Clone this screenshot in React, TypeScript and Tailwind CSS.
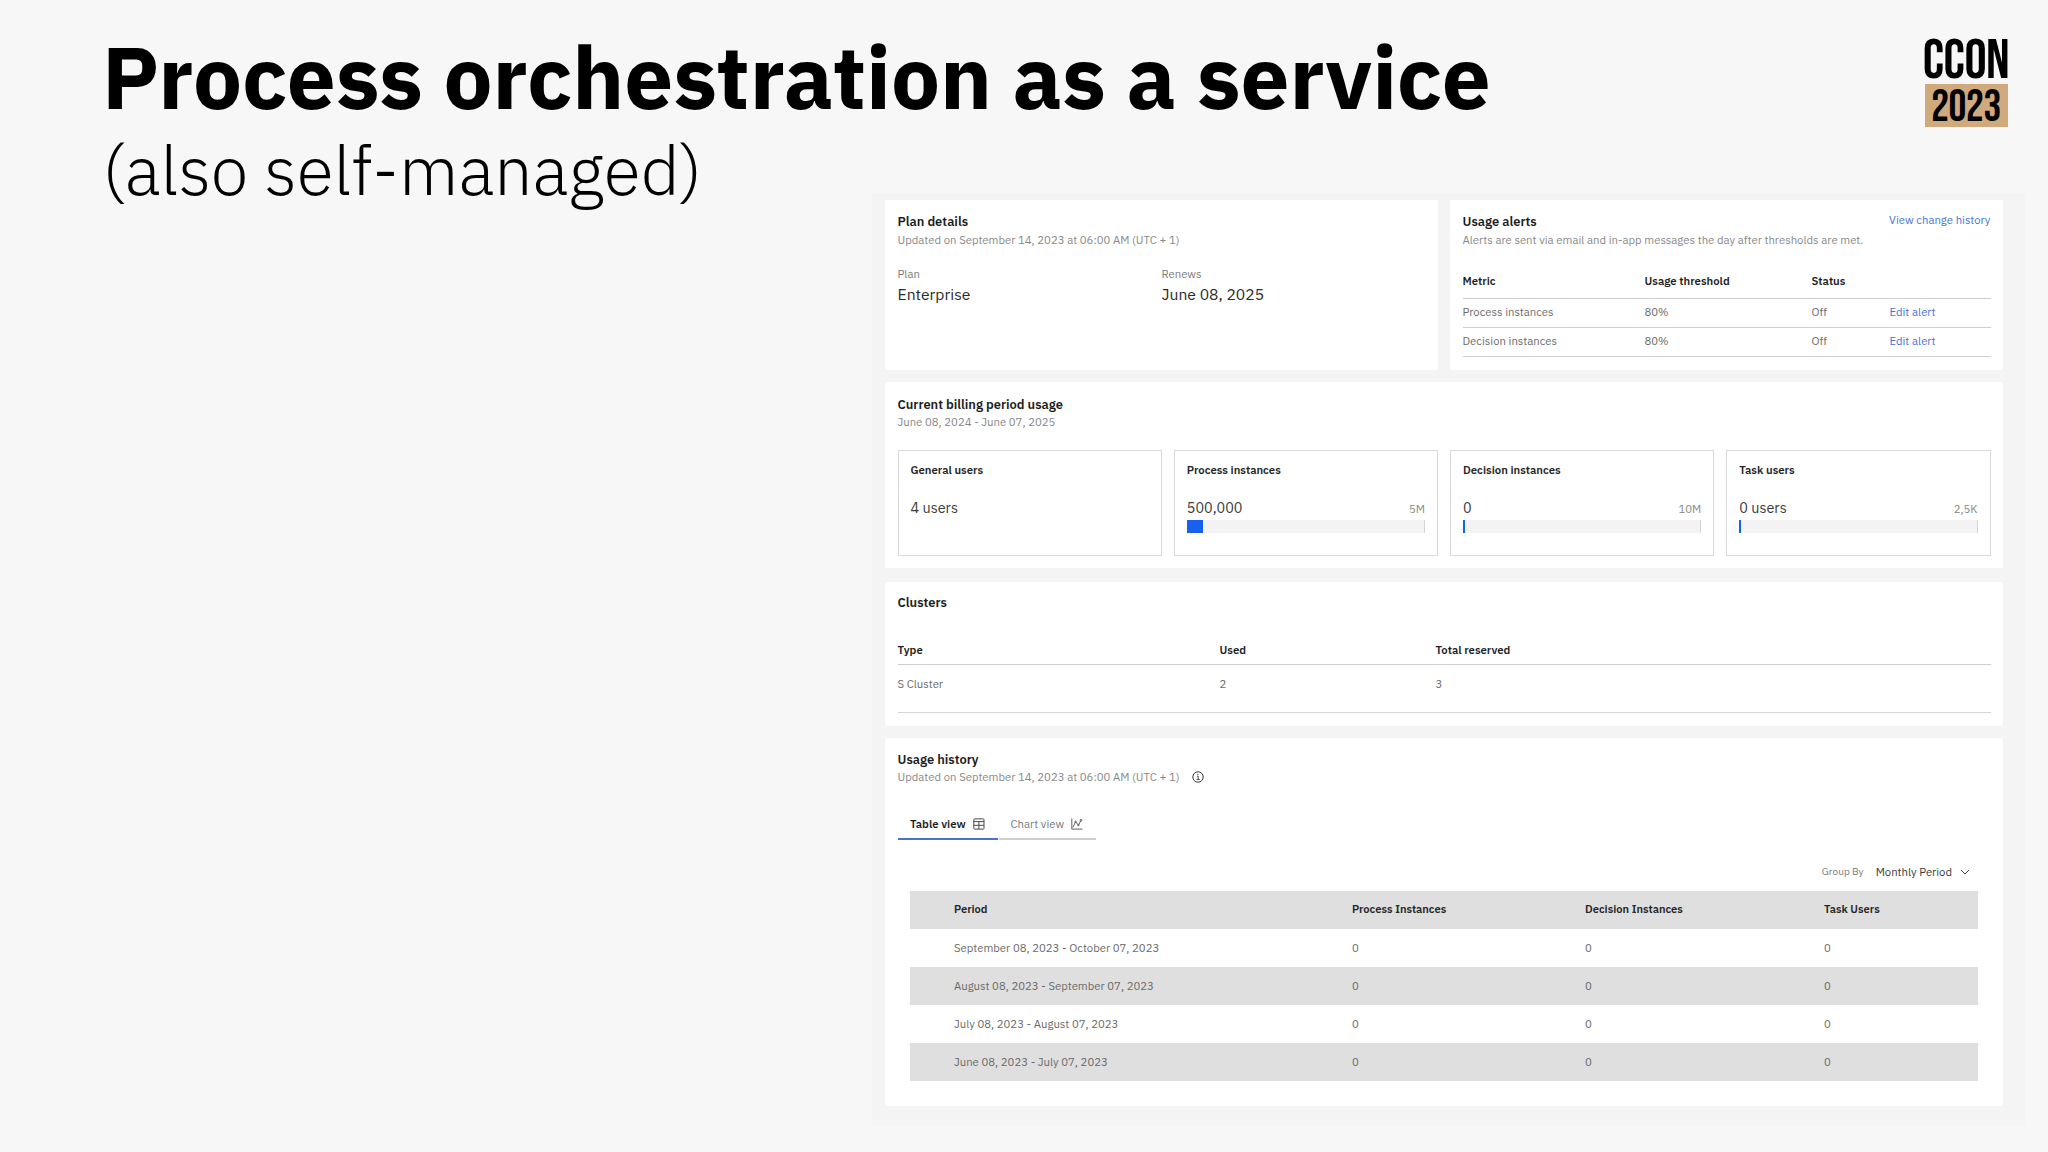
import clsx from "clsx";
import { ReactNode } from "react";

const ALERTS = [
  { metric: "Process instances", threshold: "80%", status: "Off" },
  { metric: "Decision instances", threshold: "80%", status: "Off" },
];

const USAGE = [
  { label: "General users", value: "4 users" },
  { label: "Process instances", value: "500,000", limit: "5M", fill: 16 },
  { label: "Decision instances", value: "0", limit: "10M", fill: 2 },
  { label: "Task users", value: "0 users", limit: "2,5K", fill: 2 },
];

const HISTORY = [
  "September 08, 2023 - October 07, 2023",
  "August 08, 2023 - September 07, 2023",
  "July 08, 2023 - August 07, 2023",
  "June 08, 2023 - July 07, 2023",
];

const HISTORY_COLS = "grid grid-cols-[398px_233px_239px_1fr] items-center pl-11";

function Card({ className, children }: { className?: string; children: ReactNode }) {
  return <section className={clsx("rounded-[2px] bg-white px-[12.5px]", className)}>{children}</section>;
}

function Title({ children }: { children: ReactNode }) {
  return <h2 className="text-[12.9px] leading-4 font-semibold text-[#1c1c1c]">{children}</h2>;
}

function InfoIcon() {
  return (
    <svg className="size-3" viewBox="0 0 12 12" fill="none" stroke="#3a3a3a">
      <circle cx="6" cy="6" r="5.2" strokeWidth="1" />
      <path d="M5 5.2h1.2v3.2M4.5 8.5h3.2" strokeWidth="0.9" />
      <circle cx="5.9" cy="3.4" r="0.6" fill="#3a3a3a" stroke="none" />
    </svg>
  );
}

function TableIcon() {
  return (
    <svg className="size-3" viewBox="0 0 12 12" fill="none" stroke="#4a4a4a" strokeWidth="1">
      <rect x="0.8" y="0.9" width="10.2" height="10.2" rx="0.8" />
      <path d="M0.8 3.6h10.2M0.8 7.3h10.2M5.9 3.6v7.5" />
    </svg>
  );
}

function ChartIcon() {
  return (
    <svg className="size-3" viewBox="0 0 12 12" fill="none" stroke="#626262" strokeWidth="1">
      <path d="M0.8 0.5v10.6h10.7" />
      <path d="M1.8 9.4 4.6 3.8 7.4 7.2 9.9 2.6" />
      <circle cx="4.6" cy="3.8" r="0.7" />
      <circle cx="7.4" cy="7.1" r="0.7" />
      <circle cx="10" cy="2.3" r="0.9" />
    </svg>
  );
}

function Logo() {
  return (
    <div className="mt-[39px] flex w-[84px] flex-col items-center font-['Bebas_Neue','Roboto_Condensed',sans-serif] text-black">
      <div className="text-[55.5px] leading-[45px] tracking-[-0.5px]">CCON</div>
      <div className="flex h-[43px] w-[83px] items-center justify-center bg-[#d0aa7c] pt-[5px] text-[44.5px] leading-[38px] tracking-[-0.4px]">
        2023
      </div>
    </div>
  );
}

function PlanDetails() {
  return (
    <Card className="pt-[14px]">
      <Title>Plan details</Title>
      <p className="mt-0.5 leading-4 text-[#888888]">Updated on September 14, 2023 at 06:00 AM (UTC + 1)</p>
      <div className="mt-[18px] grid grid-cols-2">
        {[["Plan", "Enterprise"], ["Renews", "June 08, 2025"]].map(([label, value]) => (
          <div key={label}>
            <p className="leading-4 text-[#7a7a7a]">{label}</p>
            <p className="mt-0.5 text-[15.7px] leading-5 text-[#2b2b2b]">{value}</p>
          </div>
        ))}
      </div>
    </Card>
  );
}

function UsageAlerts() {
  return (
    <Card className="pt-[14px]">
      <div className="flex justify-between">
        <Title>Usage alerts</Title>
        <a className="-mt-0.5 leading-4 text-[#4574d8]">View change history</a>
      </div>
      <p className="mt-0.5 leading-4 text-[#888888]">
        Alerts are sent via email and in-app messages the day after thresholds are met.
      </p>
      <div className="mt-[17px]">
        <div className="grid h-[34px] grid-cols-[182px_167px_78px_1fr] items-center border-b border-[#cfcfcf] font-semibold text-[#1f1f1f]">
          <span>Metric</span>
          <span>Usage threshold</span>
          <span>Status</span>
        </div>
        {ALERTS.map((alert) => (
          <div
            key={alert.metric}
            className="grid h-[29px] grid-cols-[182px_167px_78px_1fr] items-center border-b border-[#cfcfcf] pb-0.5"
          >
            <span>{alert.metric}</span>
            <span>{alert.threshold}</span>
            <span>{alert.status}</span>
            <a className="text-[#4574d8]">Edit alert</a>
          </div>
        ))}
      </div>
    </Card>
  );
}

function BillingUsage() {
  return (
    <Card className="h-[186px] pt-[15px]">
      <Title>Current billing period usage</Title>
      <p className="mt-px leading-4 text-[#888888]">June 08, 2024 - June 07, 2025</p>
      <div className="mt-5 grid grid-cols-4 gap-3">
        {USAGE.map((item) => (
          <div key={item.label} className="h-[106px] border border-[#d9d9d9] px-3 pt-[11px]">
            <p className="leading-4 font-semibold text-[#262626]">{item.label}</p>
            <div className="mt-5 flex items-baseline justify-between leading-5">
              <span className="text-[14.4px] text-[#3a3a3a]">{item.value}</span>
              {item.limit && <span className="text-[#888888]">{item.limit}</span>}
            </div>
            {item.limit && (
              <div className="mt-px h-[13px] border-r border-[#d4d4d4] bg-[#f3f3f3]">
                <div className="h-full bg-[#1860f0]" style={{ width: item.fill }} />
              </div>
            )}
          </div>
        ))}
      </div>
    </Card>
  );
}

function Clusters() {
  return (
    <Card className="mt-0.5 h-36 pt-[13px]">
      <Title>Clusters</Title>
      <div className="mt-[26px] grid h-7 grid-cols-[322px_216px_1fr] items-center border-b border-[#cfcfcf] font-semibold text-[#1f1f1f]">
        <span>Type</span>
        <span>Used</span>
        <span>Total reserved</span>
      </div>
      <div className="grid h-12 grid-cols-[322px_216px_1fr] items-center border-b border-[#d4d4d4] pb-2">
        <span>S Cluster</span>
        <span>2</span>
        <span>3</span>
      </div>
    </Card>
  );
}

function UsageHistory() {
  return (
    <Card className="h-[368px] pt-[14px]">
      <Title>Usage history</Title>
      <div className="mt-px flex items-center gap-3">
        <p className="leading-4 text-[#888888]">Updated on September 14, 2023 at 06:00 AM (UTC + 1)</p>
        <InfoIcon />
      </div>
      <div className="mt-[25px] flex gap-px">
        <div className="flex h-[30px] w-[100px] items-center gap-[7px] border-b-2 border-[#4574c8] pl-[12.5px] font-semibold text-[#1f1f1f]">
          Table view
          <TableIcon />
        </div>
        <div className="flex h-[30px] w-[97px] items-center gap-[7px] border-b-2 border-[#cfcfcf] pl-3 text-[#7a7a7a]">
          Chart view
          <ChartIcon />
        </div>
      </div>
      <div className="mt-[22px] px-[12.5px]">
        <div className="flex h-5 items-center justify-end pr-2">
          <span className="text-[10.1px] text-[#7a7a7a]">Group By</span>
          <span className="ml-3 text-[#3a3a3a]">Monthly Period</span>
          <svg className="ml-2 h-1.5 w-[10px]" viewBox="0 0 10 6" fill="none" stroke="#4a4a4a">
            <path d="M1 1l4 4 4-4" />
          </svg>
        </div>
        <div className="mt-[9px]">
          <div className={clsx(HISTORY_COLS, "h-[38px] bg-[#dfdfdf] pb-px text-[11.15px] font-semibold text-[#262626]")}>
            <span>Period</span>
            <span>Process Instances</span>
            <span>Decision Instances</span>
            <span>Task Users</span>
          </div>
          {HISTORY.map((period, index) => (
            <div key={period} className={clsx(HISTORY_COLS, "h-[38px]", index % 2 === 1 && "bg-[#dfdfdf]")}>
              <span>{period}</span>
              <span>0</span>
              <span>0</span>
              <span>0</span>
            </div>
          ))}
        </div>
      </div>
    </Card>
  );
}

export default function App() {
  return (
    <div className="h-[1152px] w-[2048px] overflow-hidden bg-[#f7f7f7] font-['IBM_Plex_Sans',Roboto,sans-serif]">
      <header className="flex h-[193px] items-start justify-between pr-10 pl-[102px] text-black">
        <div className="pt-8">
          <h1 className="text-[87.1px] leading-[90px] font-bold">Process orchestration as a service</h1>
          <p className="mt-[5px] text-[67.9px] leading-[86px] font-light">(also self-managed)</p>
        </div>
        <Logo />
      </header>
      <main className="ml-[872px] flex h-[932px] w-[1153px] flex-col gap-3 bg-[#f4f4f4] pt-[7px] pr-[22px] pl-[13px] text-[11.32px] text-[#6a6a6a]">
        <div className="grid h-[170px] shrink-0 grid-cols-2 gap-3">
          <PlanDetails />
          <UsageAlerts />
        </div>
        <BillingUsage />
        <Clusters />
        <UsageHistory />
      </main>
    </div>
  );
}
